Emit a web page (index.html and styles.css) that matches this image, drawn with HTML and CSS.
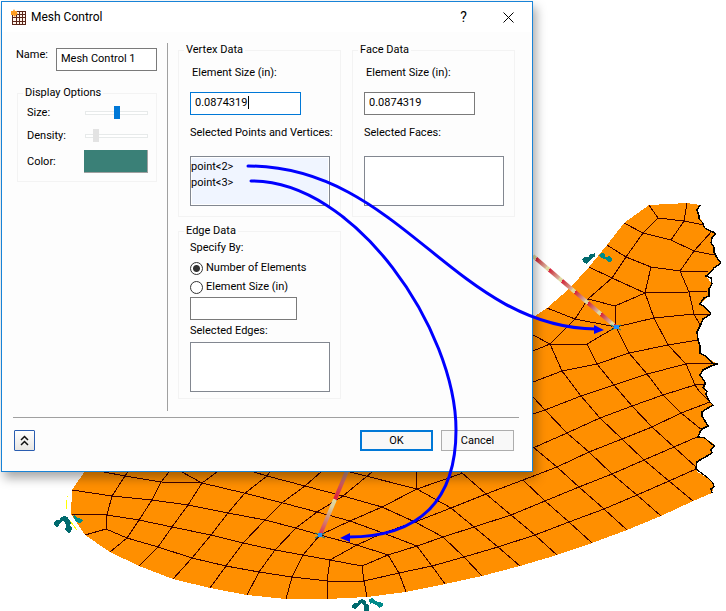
FILE: index.html
```html
<!DOCTYPE html>
<html lang="en">
<head>
<meta charset="utf-8">
<title>Mesh Control</title>
<link rel="stylesheet" href="styles.css">
</head>
<body>
<main class="viewport">
  <svg class="model" width="726" height="611" viewBox="0 0 726 611" role="img" aria-label="Meshed part">
    <defs>
      <linearGradient id="rodA" gradientUnits="userSpaceOnUse" x1="549" y1="270" x2="562" y2="281" spreadMethod="repeat">
        <stop offset="0" stop-color="#dc1c3c"/><stop offset=".2" stop-color="#cf4a50"/><stop offset=".75" stop-color="#d9b49c"/><stop offset=".8" stop-color="#e0dca0"/><stop offset="1" stop-color="#dcd0a0"/>
      </linearGradient>
      <linearGradient id="rodB" gradientUnits="userSpaceOnUse" x1="347" y1="472" x2="320" y2="535">
        <stop offset="0" stop-color="#c09080"/><stop offset=".4" stop-color="#dc2040"/><stop offset=".43" stop-color="#dc2040"/><stop offset=".44" stop-color="#e0dca0"/><stop offset=".55" stop-color="#dcd0a0"/><stop offset=".7" stop-color="#d09880"/><stop offset="1" stop-color="#dc3048"/>
      </linearGradient>
    </defs>
    <path fill="#ff8f00" shape-rendering="crispEdges" d="M85 471L72 490L71 514L85 535L110 552L139 566L173 579L210 588L247 595L286 599L327 599L367 597L406 592L445 584L482 576L520 566L557 555L592 543L627 530L661 516L693 501L712 493L714 487L713 483L708 478L697 472L696 465L700 460L712 453L711 450L715 446L714 444L705 438L698 437L700 432L708 426L702 416L702 412L713 405L710 402L708 399L707 393L705 392L705 384L700 375L703 370L717 364L700 353L700 346L698 340L697 332L703 319L711 314L700 304L709 296L709 289L712 284L706 276L710 273L714 268L721 263L717 258L714 252L714 247L711 243L712 238L716 234L713 232L706 229L703 223L699 216L697 210L700 205L687 203L649 205L624 223L607 245L589 267L570 288L547 308L500 340L400 440Z"/>
    <path class="mesh-line" d="M104 472L125 476L161 482L202 483L244 493L283 503L317 512L350 521L383 533L417 546L432 566L445 584
      M182 472L202 483M72 490L112 496L152 500L188 505L228 513L265 520L296 528L320 535L357 545L388 555L399 573L406 592
      M254 472L267 476L305 486L343 496L382 507L415 522L443 537L464 557L482 576
      M71 514L107 515L139 520L172 527L211 535L243 543L275 550L303 555L330 560L362 566L388 555L417 546L443 537L474 527L511 515L545 501L579 487L612 474L644 460L674 447L697 437
      M85 535L106 529L127 538L158 547L192 558L226 566L259 572L292 577L328 581L364 581L399 573L432 566L464 557L498 547L535 535L569 522L604 509L637 495L669 481L696 469
      M128 472L125 476L112 496L107 515L106 529M169 472L161 482L152 500L139 520L127 538L110 552
      M217 472L202 483L188 505L172 527L158 547L139 566M270 472L267 476L244 494L228 513L211 535L192 558L173 579
      M321 472L305 486L283 502L265 520L243 543L226 566L210 588M372 472L343 496L317 512L296 528L275 550L259 572L247 595
      M463 473L417 489L382 507L350 521L320 535L303 555L292 577L286 599M350 472L417 489M416 472L417 489L451 508L474 527L498 547L520 566
      M461 472L486 494L511 515L535 535L557 555M357 545L383 533L415 522L451 508L486 494L523 480L557 467L589 452L622 439L652 427L681 413L710 402
      M357 545L330 560L327 581L327 599M362 566L364 581L367 597
      M523 480L545 501L569 522L592 543M533 447L557 467L579 487L604 509L627 530M533 397L545 410L567 433L589 452L612 474L637 495L661 516
      M533 448L567 433L600 418L632 406L663 395L695 385L706 384M533 414L545 410L581 396L614 385L647 374L686 364L711 363
      M533 382L562 371L597 364L629 353L668 345L698 340M562 371L581 396L600 418L622 439L644 460L669 481L693 501
      M597 364L614 385L632 406L652 427L674 447L697 468M629 353L647 374L663 395L681 413L702 430M695 385L699 391L710 402
      M533 335L550 344L562 371M550 344L587 344L597 364M533 351L550 344L575 319L588 299L612 278L626 257L643 233L658 218L649 205
      M587 344L616 327L629 353M616 327L615 306L588 299M547 308L575 319L616 327L654 318L694 314L709 314
      M615 306L645 293L612 278L589 267M645 293L654 318L668 345L686 364L695 385M645 293L689 292L707 291M645 293L651 267L626 257L607 245
      M651 267L680 271L708 272M680 271L689 292L694 314L700 325M680 271L694 251L714 255M624 223L643 233L671 240L694 251L712 231M671 240L684 221L658 218M687 203L684 221L704 225"/>
    <path class="torn-edge" d="M700 205L697 210L699 216L699 219L703 223L704 227L706 229L713 232L716 234L712 238L711 243L714 247L714 252L717 258L721 263L714 268L710 273L706 276L711 278L712 284L709 289L709 296L704 298L700 304L705 307L711 314L703 319L701 324L697 332L698 340L700 346L700 353L707 357L712 363L717 364L711 366L703 370L700 375L705 382L705 384L703 388L707 391L706 394L708 399L710 402L713 405L708 408L702 412L702 416L708 426L702 429L700 432L698 437L705 438L709 442L715 446L711 450L712 453L707 456L700 460L697 462L696 469L700 472L708 478L713 483L714 487L711 489L712 493"/>
    <path d="M533 256L616 327" stroke="url(#rodA)" stroke-width="4"/>
    <path d="M347 471L320 535" stroke="url(#rodB)" stroke-width="4"/>
    <g stroke="#008080"><path d="M611 325l10 5m0-5l-10 5M315 533l10 5m0-5l-10 5"/><path stroke="#1e90ff" stroke-width="4" d="M614 327h5M318 535h4"/></g>
    <g class="restraint">
      <path class="dark" d="M582 259l3-2 4 0 1-3 3 0 2-1v3l-3 2-3 3-2 3-3-1zM590 255l2-1h3v3l-4 1z"/>
      <path d="M599 255l3-2 3 1v3l2 0 2-1 3 2 0 3-3 1-4-3-4-1z"/>
      <path class="dark" d="M54 522l3-2h3l1-3 3-1 4 1 1 3 2 2-1 4 2 2-1 4-3 1-3-3 1-4-1-4-3-1-2 2-1 3-3 1-2-2z"/>
      <path d="M72 516l3-1 2 3 5 1 1 2-3 2-4-1-2-4z"/>
      <path class="dark" d="M352 605l3-2 3 0 1-3 3-1 4 2v3l3 1 0 6h-5v-5l-3-3-3 4-3 2-3-1z"/>
      <path d="M369 599l4-1 2 3 4 1 4 1v3l-4 2-3-3-4-2-2 1z"/>
    </g>
    <path class="glint" d="M67 496v1M66 500v9M70 521l7 9"/>
  </svg>

  <section class="dialog" role="dialog" aria-labelledby="dialog-title">
    <header class="titlebar">
      <svg class="app-icon" width="16" height="18" viewBox="0 0 16 18" aria-hidden="true">
        <path d="M1 3h14v14H1z" fill="#fff4ea"/>
        <path d="M1.500 3v14M5.500 3v14M8.500 3v14M11.500 3v14M14.500 3v14M1 3.500h14M1 6.500h14M1 9.500h14M1 13.500h14M1 16.500h14" stroke="#5a2418" fill="none"/>
        <path d="M3 1l1 2 2 0 0 2 1 1-2 1-1 2-2-2-2 0 0-2 0-2 2 0z" fill="#ff9c20"/>
      </svg>
      <h1 id="dialog-title">Mesh Control</h1>
      <button class="caption-button" type="button" aria-label="Help">?</button>
      <button class="caption-button" type="button" aria-label="Close"><svg width="11" height="11" viewBox="0 0 11 11"><path d="M.5.5l10 10m0-10l-10 10" stroke="#000"/></svg></button>
    </header>
    <form class="content">
      <div class="general">
        <div class="name-row"><label for="name">Name:</label><input class="field" id="name" type="text" value="Mesh Control 1"></div>
        <fieldset class="display">
          <legend>Display Options</legend>
          <div class="option"><label for="size">Size:</label><input id="size" type="range" min="0" max="100" value="50"></div>
          <div class="option"><label for="density">Density:</label><input id="density" type="range" min="0" max="100" value="12" disabled></div>
          <div class="option color"><label for="color">Color:</label><button class="swatch" id="color" type="button"></button></div>
        </fieldset>
      </div>
      <div class="groups">
        <fieldset class="group">
          <legend>Vertex Data</legend>
          <label class="size-label" for="vertex-size">Element Size (in):</label>
          <span class="editing"><input class="field" id="vertex-size" type="text" value="0.0874319"></span>
          <span class="list-label" id="points-label">Selected Points and Vertices:</span>
          <ul class="list filled" role="listbox" aria-labelledby="points-label"><li role="option">point&lt;2&gt;</li><li role="option">point&lt;3&gt;</li></ul>
        </fieldset>
        <fieldset class="group">
          <legend>Face Data</legend>
          <label class="size-label" for="face-size">Element Size (in):</label>
          <input class="field" id="face-size" type="text" value="0.0874319">
          <span class="list-label" id="faces-label">Selected Faces:</span>
          <ul class="list" role="listbox" aria-labelledby="faces-label"></ul>
        </fieldset>
        <fieldset class="group edge">
          <legend>Edge Data</legend>
          <span id="specify-label">Specify By:</span>
          <div class="choices" role="radiogroup" aria-labelledby="specify-label">
            <label><input type="radio" name="specify" checked>Number of Elements</label>
            <label><input type="radio" name="specify">Element Size (in)</label>
          </div>
          <input class="field" type="text" aria-label="Edge value">
          <span id="edges-label">Selected Edges:</span>
          <ul class="list" role="listbox" aria-labelledby="edges-label"></ul>
        </fieldset>
      </div>
    </form>
    <footer class="actions">
      <button class="collapse" type="button" aria-label="Collapse"><svg width="9" height="11" viewBox="0 0 9 11"><path d="M1 5l3.500-3.500L8 5M1 10l3.500-3.500L8 10" fill="none" stroke="#111" stroke-width="1.500"/></svg></button>
      <button class="push default" type="button">OK</button>
      <button class="push" type="button">Cancel</button>
    </footer>
  </section>

  <svg class="callouts" width="726" height="611" viewBox="0 0 726 611" aria-hidden="true">
    <path d="M248 166C400 166 455 328 596 329M251 181C355 180 456 330 456 430C456 500 420 537 348 537"/>
    <path class="head" d="M604 330l-10-5v9zM340 538l10-5v9z"/>
  </svg>
</main>
</body>
</html>
```
FILE: styles.css
```css
* { box-sizing: border-box; }
body { margin: 0; background: #fff; color: #000; font: 11px/14px Roboto, "Liberation Sans", sans-serif; }
button, input { font: inherit; color: inherit; margin: 0; }
.viewport { position: relative; min-height: 100vh; overflow: hidden; }
.model, .callouts { position: absolute; top: 0; left: 0; }
.callouts { pointer-events: none; }
.callouts path { fill: none; stroke: #00f; stroke-width: 3; stroke-linecap: round; }
.callouts .head { fill: #00f; stroke: none; }
.mesh-line { fill: none; stroke: #3c0000; shape-rendering: crispEdges; }
.torn-edge { fill: none; stroke: #000; stroke-width: 1.4; shape-rendering: crispEdges; }
.restraint { fill: #008b8b; shape-rendering: crispEdges; }
.restraint .dark { fill: #006a6e; }
.glint { fill: none; stroke: #ff0; stroke-width: 1; shape-rendering: crispEdges; }

.dialog { position: absolute; top: 1px; left: 1px; width: max-content; background: #fdfdfd; border: 1px solid #1883d7; box-shadow: 3px 6px 10px rgba(0, 0, 0, .35); }
.titlebar { display: flex; align-items: center; height: 30px; padding: 0 18px 0 9px; background: #fff; }
.titlebar h1 { flex: 1; margin: 0 0 0 4px; font-size: 12px; line-height: 16px; font-weight: 400; }
.caption-button { display: grid; place-items: center; width: 11px; padding: 0; border: 0; background: none; font-size: 14px; }
.caption-button + .caption-button { margin-left: 34px; }

.content { display: flex; margin: 11px 17px 6px 11px; }
.general { width: 155px; padding: 5px 10px 0 3px; border-right: 1px solid #a0a0a0; }
.name-row { display: flex; justify-content: space-between; }
.name-row .field { width: 101px; }
.field { display: block; width: 111px; height: 23px; padding: 0 4px 2px; border: 1px solid #7a7a7a; border-radius: 0; background: #fff; outline: 0; }

fieldset { min-width: 0; margin: 0; border: 1px solid #f3f3f3; }
legend { height: 14px; padding: 0 2px; margin-left: -4px; }
.display { margin: 15px 0 0 1px; padding: 1px 8px 5px 9px; }
.option { display: flex; align-items: center; justify-content: space-between; height: 23px; }
.option.color { height: 29px; }
.swatch { width: 64px; height: 23px; padding: 0; border: solid #a0a0a0; border-width: 0 1px 1px 0; background: #3a8077; }
input[type="range"] { appearance: none; width: 63px; height: 14px; background: none; }
input[type="range"]::-webkit-slider-runnable-track { height: 4px; border: 1px solid #e7eaea; background: #fff; }
input[type="range"]::-webkit-slider-thumb { appearance: none; width: 6px; height: 13px; margin-top: -6px; background: #0078d7; }
input[type="range"]:disabled::-webkit-slider-thumb { background: #e3e3e3; }

.groups { display: grid; grid-template-columns: 163px 163px; gap: 7px 11px; padding: 0 0 12px 10px; }
.group { display: flex; flex-direction: column; align-items: flex-start; padding: 9px 11px 10px; }
.group legend { margin-left: -6px; }
.size-label { margin: 0 2px 12px; }
.list-label { margin: 11px 0 16px; white-space: nowrap; }
.editing { position: relative; }
.editing .field { border-color: #0078d7; }
.editing::after { content: ""; position: absolute; top: 4px; left: 58px; width: 1px; height: 13px; background: #000; }
.list { width: 140px; height: 50px; margin: 0; padding: 2px 0 0; border: 1px solid #828790; background: #fff; list-style: none; }
.list.filled { background: #f0f5ff; box-shadow: inset 0 0 0 1px #fff; }
.list li { line-height: 16px; }
.edge { padding: 3px 11px 6px; }
.edge .field { width: 107px; margin: 3px 0 4px; }
.edge .list { margin-top: 4px; }
.choices { display: grid; gap: 5px; margin-top: 6px; }
.choices label { display: flex; align-items: center; gap: 3px; height: 14px; }
input[type="radio"] { appearance: none; width: 13px; height: 13px; border: 1px solid #333; border-radius: 50%; background: #fff; }
input[type="radio"]:checked { background: radial-gradient(circle, #333 0 3px, #fff 4px); }

.actions { display: flex; align-items: center; gap: 8px; margin: 0 13px 0 11px; padding: 12px 5px 20px 1px; border-top: 1px solid #a0a0a0; }
.push { width: 73px; height: 21px; padding: 0; border: 1px solid #adadad; background: #f8f8f8; }
.push.default { border: 2px solid #0078d7; }
.collapse { display: grid; place-items: center; width: 21px; height: 21px; margin-right: auto; padding: 0; border: 1px solid #2a5db0; border-radius: 1px; background: linear-gradient(#fff, #e8e6e2); }
```
